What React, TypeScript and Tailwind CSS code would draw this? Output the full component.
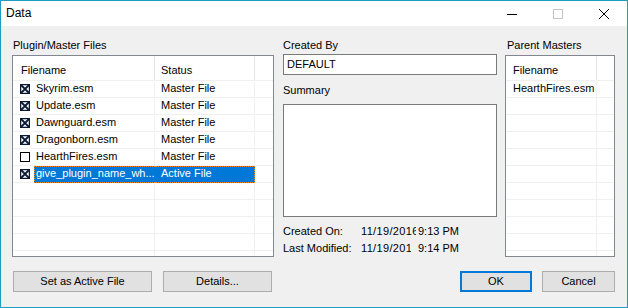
const font = "font-['Liberation_Sans',Arial,sans-serif]";

type Plugin = {
  name: string;
  status: string;
  checked: boolean;
  selected?: boolean;
};

const plugins: Plugin[] = [
  { name: "Skyrim.esm", status: "Master File", checked: true },
  { name: "Update.esm", status: "Master File", checked: true },
  { name: "Dawnguard.esm", status: "Master File", checked: true },
  { name: "Dragonborn.esm", status: "Master File", checked: true },
  { name: "HearthFires.esm", status: "Master File", checked: false },
  {
    name: "give_plugin_name_wh...",
    status: "Active File",
    checked: true,
    selected: true,
  },
];

function CheckBox({ checked }: { checked: boolean }) {
  return (
    <svg width="10" height="10" viewBox="0 0 10 10" className="mt-[2px] shrink-0">
      <rect
        x="0.5"
        y="0.5"
        width="9"
        height="9"
        fill="none"
        stroke={checked ? "#0a1a33" : "#000"}
        strokeWidth={checked ? 1.5 : 1}
      />
      {checked && (
        <path d="M1 1 L9 9 M9 1 L1 9" stroke="#0a1a33" strokeWidth="1.8" />
      )}
    </svg>
  );
}

function PluginList() {
  const empty = Array.from({ length: 5 });
  return (
    <div className="mt-[3px] h-[202px] overflow-hidden border border-[#828790] bg-white">
      <div className="flex h-[24px] leading-[13px]">
        <div className="w-[142px] border-r border-[#e5e5e5] pl-[8px] pt-[8px]">
          Filename
        </div>
        <div className="w-[100px] border-r border-[#e5e5e5] pl-[6px] pt-[8px]">
          Status
        </div>
      </div>
      {plugins.map((p) => (
        <div key={p.name} className="flex h-[17px] border-t border-[#f0f0f0] pt-px leading-[13px]">
          <div className="flex w-[142px] border-r border-[#f0f0f0] pl-[7px]">
            <CheckBox checked={p.checked} />
            {p.selected ? (
              <span className="-mt-px ml-[4px] h-[17px] flex-1 border-y border-l border-dotted border-[#f28a1a] bg-[#0078d7] pl-[1px] text-white">
                {p.name}
              </span>
            ) : (
              <span className="ml-[6px]">{p.name}</span>
            )}
          </div>
          {p.selected ? (
            <div className="-mt-px h-[17px] w-[100px] border-y border-r border-dotted border-[#f28a1a] bg-[#0078d7] pl-[6px] text-white">
              {p.status}
            </div>
          ) : (
            <div className="w-[100px] border-r border-[#f0f0f0] pl-[6px]">
              {p.status}
            </div>
          )}
        </div>
      ))}
      {empty.map((_, i) => (
        <div key={i} className="flex h-[17px] border-t border-[#f0f0f0]">
          <div className="w-[142px] border-r border-[#f0f0f0]" />
          <div className="w-[100px] border-r border-[#f0f0f0]" />
        </div>
      ))}
    </div>
  );
}

function MasterList() {
  const empty = Array.from({ length: 10 });
  return (
    <div className="mt-[3px] h-[202px] overflow-hidden border border-[#828790] bg-white">
      <div className="flex h-[24px] leading-[13px]">
        <div className="w-[91px] border-r border-[#e5e5e5] pl-[7px] pt-[8px]">
          Filename
        </div>
      </div>
      <div className="flex h-[17px] border-t border-[#f0f0f0] pt-px leading-[13px]">
        <div className="w-[91px] border-r border-[#f0f0f0] pl-[7px]">
          HearthFires.esm
        </div>
      </div>
      {empty.map((_, i) => (
        <div key={i} className="flex h-[17px] border-t border-[#f0f0f0]">
          <div className="w-[91px] border-r border-[#f0f0f0]" />
        </div>
      ))}
    </div>
  );
}

function Button({
  label,
  width,
  primary,
}: {
  label: string;
  width: string;
  primary?: boolean;
}) {
  return (
    <div
      className={`flex h-[21px] items-center justify-center bg-[#e1e1e1] ${width} ${
        primary ? "border-2 border-[#0078d7]" : "border border-[#adadad]"
      }`}
    >
      {label}
    </div>
  );
}

export default function App() {
  return (
    <div
      className={`h-[308px] w-[628px] overflow-hidden border border-[#1f9bc4] text-[11px] text-black ${font}`}
    >
      <div className="flex h-[25px] bg-white">
        <div className="flex-1 pl-[5px] pt-[5px] text-[12px] leading-[15px]">Data</div>
        <div className="flex w-[46px] items-center justify-center">
          <svg width="10" height="10" viewBox="0 0 10 10">
            <path d="M0 5.5 H10" stroke="#000" strokeWidth="1" />
          </svg>
        </div>
        <div className="flex w-[46px] items-center justify-center">
          <svg width="10" height="10" viewBox="0 0 10 10">
            <rect x="0.5" y="0.5" width="9" height="9" fill="none" stroke="#c4c4c4" />
          </svg>
        </div>
        <div className="flex w-[46px] items-center justify-center">
          <svg width="10" height="10" viewBox="0 0 10 10">
            <path d="M0 0 L10 10 M10 0 L0 10" stroke="#000" strokeWidth="1" />
          </svg>
        </div>
      </div>

      <div className="flex h-[281px] flex-col bg-[#f0f0f0] px-[11px] pt-[13px]">
        <div className="flex">
          <div className="w-[262px]">
            <div className="ml-px h-[13px] leading-[13px]">Plugin/Master Files</div>
            <PluginList />
          </div>

          <div className="ml-[9px] w-[214px]">
            <div className="h-[13px] leading-[13px]">Created By</div>
            <div className="mt-[2px] flex h-[21px] items-center border border-[#7a7a7a] bg-white pl-[3px]">
              DEFAULT
            </div>
            <div className="mt-[9px] h-[13px] leading-[13px]">Summary</div>
            <div className="mt-[7px] h-[113px] border border-[#7a7a7a] bg-white" />
            <div className="mt-[8px] flex h-[13px] leading-[13px]">
              <span className="w-[78px]">Created On:</span>
              <span className="w-[55px] overflow-hidden whitespace-nowrap tracking-[0.35px]">
                11/19/2016
              </span>
              <span className="ml-[2px]">9:13 PM</span>
            </div>
            <div className="mt-[4px] flex h-[13px] leading-[13px]">
              <span className="w-[78px]">Last Modified:</span>
              <span className="w-[50px] overflow-hidden whitespace-nowrap tracking-[0.35px]">
                11/19/2016
              </span>
              <span className="ml-[7px]">9:14 PM</span>
            </div>
          </div>

          <div className="ml-[8px] w-[110px]">
            <div className="ml-[2px] h-[13px] leading-[13px]">Parent Masters</div>
            <MasterList />
          </div>
        </div>

        <div className="mt-[14px] flex">
          <div className="ml-px">
            <Button label="Set as Active File" width="w-[139px]" />
          </div>
          <div className="ml-[11px]">
            <Button label="Details..." width="w-[109px]" />
          </div>
          <div className="ml-auto">
            <Button label="OK" width="w-[72px]" primary />
          </div>
          <div className="ml-[10px] mr-px">
            <Button label="Cancel" width="w-[73px]" />
          </div>
        </div>
      </div>
    </div>
  );
}
